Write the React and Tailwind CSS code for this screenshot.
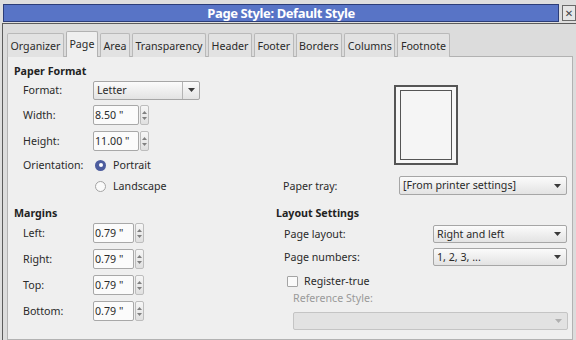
import React from "react";

const tabs = [
  "Organizer",
  "Page",
  "Area",
  "Transparency",
  "Header",
  "Footer",
  "Borders",
  "Columns",
  "Footnote",
];

const Arrow = ({ light }) => (
  <svg width="7" height="4" viewBox="0 0 7 4">
    <path d="M0 0 L7 0 L3.5 4 Z" fill={light ? "#b0b0b0" : "#3a3a3a"} />
  </svg>
);

// combo box, gradient like the KDE look
const Dropdown = ({ value, width, height = 18, separator, disabled }) => (
  <div
    className={`flex items-center rounded-[2px] border ${
      disabled
        ? "border-[#c4c4c4] bg-[#e2e2e2]"
        : "border-[#a6a6a6] bg-gradient-to-b from-[#fbfbfb] to-[#e3e3e3]"
    }`}
    style={{ width, height }}
  >
    <span className="flex-1 pl-[3px] leading-none text-[#2a2a2a]">{value}</span>
    {separator ? (
      <div className="flex h-full w-[17px] items-center justify-center border-l border-[#b4b4b4]">
        <Arrow />
      </div>
    ) : (
      <div className="flex w-[17px] items-center justify-center">
        <Arrow light={disabled} />
      </div>
    )}
  </div>
);

const SpinBox = ({ value, inputWidth }) => (
  <div className="flex h-[20px] items-stretch gap-[1px]">
    <div
      className="flex items-center rounded-[2px] border border-[#a8a8a8] bg-[#fbfbfb] pl-[1px] leading-none text-[#2a2a2a]"
      style={{ width: inputWidth }}
    >
      {value}
    </div>
    <div className="flex w-[9px] flex-col items-center justify-center gap-[3px] rounded-[2px] border border-[#bdbdbd] bg-gradient-to-b from-[#f6f6f6] to-[#e0e0e0]">
      <svg width="5" height="3" viewBox="0 0 5 3">
        <path d="M0 3 L5 3 L2.5 0 Z" fill="#808080" />
      </svg>
      <svg width="5" height="3" viewBox="0 0 5 3">
        <path d="M0 0 L5 0 L2.5 3 Z" fill="#808080" />
      </svg>
    </div>
  </div>
);

const FieldRow = ({ label, children, className }) => (
  <div className={`flex h-[20px] items-center ${className}`}>
    <span className="w-[79px] pl-[9px] text-[#2a2a2a]">{label}</span>
    {children}
  </div>
);

const App = () => {
  return (
    <div
      className="flex h-[340px] w-[576px] flex-col overflow-hidden bg-[#dedede] text-[10.67px]"
      style={{ fontFamily: '"Noto Sans", "DejaVu Sans", sans-serif' }}
    >
      {/* title bar */}
      <div className="flex h-[23px] items-start pl-[3px] pt-[4px]">
        <div className="flex h-[18px] w-[560px] items-center justify-center border border-[#2c3d78] bg-[#5874c6] text-[13px] font-bold leading-none tracking-[-0.4px] text-white">
          Page Style: Default Style
        </div>
        <div className="ml-[3px] mt-[1px] flex h-[16px] w-[14px] items-center justify-center border border-[#6a6a6a] bg-[#e6e6e6] text-[10px] leading-none text-[#444]">
          ✕
        </div>
      </div>

      {/* dialog body */}
      <div className="ml-[2px] flex flex-1 flex-col border-l border-t border-[#5c5c5c] bg-[#dcdcdc] pl-[4px] pr-[2px] pt-[9px]">
        {/* tabs */}
        <div className="relative z-10 flex h-[24px] items-end gap-[2px]">
          {tabs.map((t) =>
            t === "Page" ? (
              <div
                key={t}
                className="flex h-[26px] items-center rounded-t-[2px] border border-b-0 border-[#b2b2b2] bg-[#efefef] px-[2.5px] pb-[2px] text-[#2a2a2a]"
              >
                {t}
              </div>
            ) : (
              <div
                key={t}
                className="flex h-[24px] items-center rounded-t-[2px] border border-b-0 border-[#b9b9b9] bg-[#e2e2e2] px-[2.5px] text-[#2a2a2a]"
              >
                {t}
              </div>
            )
          )}
        </div>

        {/* page panel */}
        <div className="-mt-[1px] flex w-[566px] flex-1 border border-[#b2b2b2] bg-[#efefef]">
          {/* left column */}
          <div className="flex w-[268px] flex-col pl-[6px]">
            <div className="mt-[6px] flex h-[16px] items-center font-bold text-[#222]">
              Paper Format
            </div>
            <FieldRow label="Format:" className="mt-[1px]">
              <Dropdown value="Letter" width={107} height={19} separator />
            </FieldRow>
            <FieldRow label="Width:" className="mt-[5px]">
              <SpinBox value={'8.50 "'} inputWidth={46} />
            </FieldRow>
            <FieldRow label="Height:" className="mt-[6px]">
              <SpinBox value={'11.00 "'} inputWidth={46} />
            </FieldRow>
            <div className="mt-[4px] flex h-[20px] items-center">
              <span className="w-[81px] pl-[9px] text-[#2a2a2a]">Orientation:</span>
              <div className="flex h-[11px] w-[11px] items-center justify-center rounded-full bg-[#4d5d9e]">
                <div className="h-[4px] w-[4px] rounded-full bg-white" />
              </div>
              <span className="ml-[7px] text-[#2a2a2a]">Portrait</span>
            </div>
            <div className="mt-[1px] flex h-[20px] items-center pl-[81px]">
              <div className="h-[11px] w-[11px] rounded-full border border-[#a4a4a4] bg-[#fafafa]" />
              <span className="ml-[7px] text-[#2a2a2a]">Landscape</span>
            </div>
            <div className="mt-[9px] flex h-[16px] items-center font-bold text-[#222]">
              Margins
            </div>
            <FieldRow label="Left:" className="mt-[2px]">
              <SpinBox value={'0.79 "'} inputWidth={41} />
            </FieldRow>
            <FieldRow label="Right:" className="mt-[6px]">
              <SpinBox value={'0.79 "'} inputWidth={41} />
            </FieldRow>
            <FieldRow label="Top:" className="mt-[6px]">
              <SpinBox value={'0.79 "'} inputWidth={41} />
            </FieldRow>
            <FieldRow label="Bottom:" className="mt-[6px]">
              <SpinBox value={'0.79 "'} inputWidth={41} />
            </FieldRow>
          </div>

          {/* right column */}
          <div className="flex flex-1 flex-col">
            <div className="ml-[118px] mt-[28px] flex h-[80px] w-[64px] items-center justify-center border-2 border-[#555] bg-[#f7f7f7]">
              <div className="h-[70px] w-[52px] border-[1.5px] border-[#555] bg-[#f5f5f5]" />
            </div>
            <div className="mt-[11px] flex h-[19px] items-center">
              <span className="w-[123px] pl-[7px] text-[#2a2a2a]">Paper tray:</span>
              <Dropdown value="[From printer settings]" width={168} height={19} />
            </div>
            <div className="mt-[10px] flex h-[16px] items-center font-bold text-[#222]">
              Layout Settings
            </div>
            <div className="mt-[4px] flex h-[18px] items-center">
              <span className="w-[157px] pl-[8px] text-[#2a2a2a]">Page layout:</span>
              <Dropdown value="Right and left" width={134} height={18} />
            </div>
            <div className="mt-[5px] flex h-[18px] items-center">
              <span className="w-[157px] pl-[8px] text-[#2a2a2a]">Page numbers:</span>
              <Dropdown value="1, 2, 3, ..." width={134} height={18} />
            </div>
            <div className="mt-[7px] flex h-[16px] items-center pl-[11px]">
              <div className="h-[11px] w-[11px] rounded-[1px] border border-[#a4a4a4] bg-[#fafafa]" />
              <span className="ml-[6px] text-[#2a2a2a]">Register-true</span>
            </div>
            <div className="mt-[2px] flex h-[14px] items-center pl-[17px] text-[#9a9a9a]">
              Reference Style:
            </div>
            <div className="ml-[17px] mt-[7px]">
              <Dropdown value="" width={275} height={18} disabled />
            </div>
          </div>
        </div>
      </div>
    </div>
  );
};

export default App;
